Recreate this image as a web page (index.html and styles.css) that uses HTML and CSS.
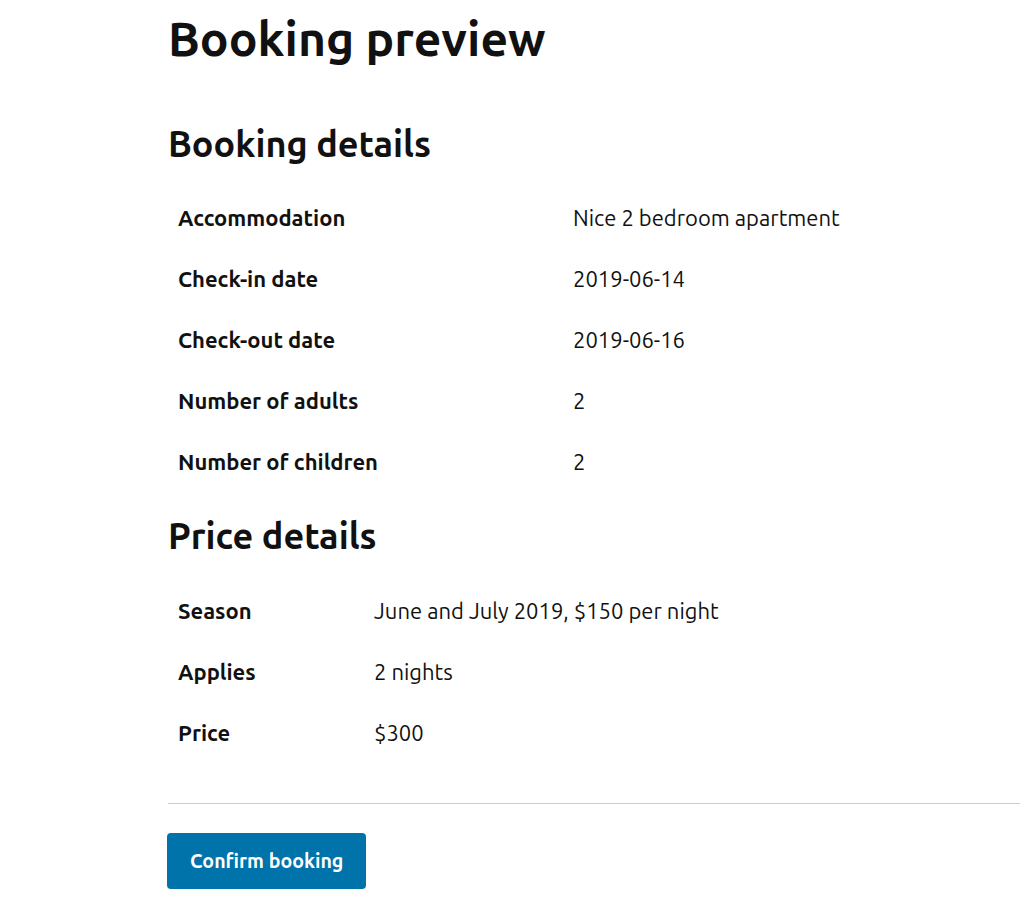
FILE: index.html
```html
<!DOCTYPE html>
<html lang="en">
<head>
<meta charset="utf-8">
<title>Booking preview</title>
<link rel="stylesheet" href="styles.css">
</head>
<body>
<main class="page">
  <h1 class="title">Booking preview</h1>
  <h2 class="section">Booking details</h2>
  <table class="details details-booking">
    <tr><th>Accommodation</th><td>Nice 2 bedroom apartment</td></tr>
    <tr><th>Check-in date</th><td>2019-06-14</td></tr>
    <tr><th>Check-out date</th><td>2019-06-16</td></tr>
    <tr><th>Number of adults</th><td>2</td></tr>
    <tr><th>Number of children</th><td>2</td></tr>
  </table>
  <h2 class="section section-price">Price details</h2>
  <table class="details details-price">
    <tr><th>Season</th><td>June and July 2019, $150 per night</td></tr>
    <tr><th>Applies</th><td>2 nights</td></tr>
    <tr><th>Price</th><td>$300</td></tr>
  </table>
</main>
<hr class="divider">
<div class="page actions">
  <button class="confirm" type="button">Confirm booking</button>
</div>
</body>
</html>
```
FILE: styles.css
```css
html, body {
  margin: 0;
  padding: 0;
  background: #fff;
}
body {
  font-family: "Ubuntu", "Noto Sans", "Open Sans", sans-serif;
  color: #111;
  overflow: hidden;
}
.page {
  width: 684px;
  margin: 0 auto;
}
.title {
  margin: 0;
  padding-top: 6px;
  font-size: 48px;
  line-height: 64px;
  font-weight: 700;
}
.section {
  margin: 0;
  padding-top: 51px;
  font-size: 36px;
  line-height: 46px;
  font-weight: 700;
}
.section-price {
  padding-top: 0;
}
.details {
  border-collapse: collapse;
  margin: 20px 0 21px;
  font-size: 22px;
}
.details-price {
  margin-top: 21px;
}
.details th,
.details td {
  text-align: left;
  padding: 16px 10px;
  line-height: 29px;
  vertical-align: top;
}
.details th {
  font-weight: 700;
}
.details td {
  font-weight: 400;
}
.details-booking th {
  width: 375px;
}
.details-price th {
  width: 176px;
}
.divider {
  border: 0;
  border-top: 1px solid #ccc;
  margin: 40px 0 29px 168px;
}
.actions {
  padding-left: 0;
}
.confirm {
  font-family: inherit;
  font-size: 19.6px;
  font-weight: 700;
  color: #fff;
  background: #0073aa;
  border: 0;
  border-radius: 4px;
  height: 56px;
  padding: 0 23px;
  margin-left: -1px;
  cursor: pointer;
}
```
